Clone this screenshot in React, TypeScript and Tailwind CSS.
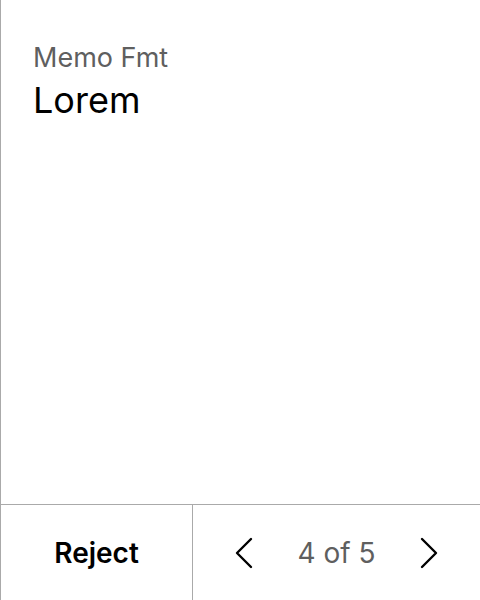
import React from 'react';

function ChevronLeft({ className }: { className?: string }) {
  return (
    <svg className={className} fill="none" viewBox="0 0 18 32" stroke="currentColor" strokeWidth={2.4}>
      <path strokeLinecap="round" strokeLinejoin="round" d="M16 2L2 16l14 14" />
    </svg>
  );
}

function ChevronRight({ className }: { className?: string }) {
  return (
    <svg className={className} fill="none" viewBox="0 0 18 32" stroke="currentColor" strokeWidth={2.4}>
      <path strokeLinecap="round" strokeLinejoin="round" d="M2 2l14 14L2 30" />
    </svg>
  );
}

export default function App() {
  return (
    <div
      className="h-[600px] w-[480px] flex flex-col bg-white border-l border-[#aaaaaa]"
      style={{ fontFamily: 'Inter, "Noto Sans", sans-serif' }}
    >
      {/* Content */}
      <div className="flex-1 px-8 pt-[42px]">
        <p className="text-[27px] leading-[32px] text-[#5f5f5f]">Memo Fmt</p>
        <h1 className="mt-[4px] text-[36px] leading-[44px] text-black">Lorem</h1>
      </div>

      {/* Footer */}
      <div className="h-[96px] flex border-t border-[#aaaaaa]">
        <button className="w-[192px] flex items-center justify-center text-[28px] font-semibold text-black border-r border-[#aaaaaa]">
          Reject
        </button>
        <div className="flex-1 flex items-center justify-between pl-[42px] pr-[42px]">
          <ChevronLeft className="w-[18px] h-[32px] text-black" />
          <span className="text-[28px] text-[#5f5f5f]">4 of 5</span>
          <ChevronRight className="w-[18px] h-[32px] text-black" />
        </div>
      </div>
    </div>
  );
}
